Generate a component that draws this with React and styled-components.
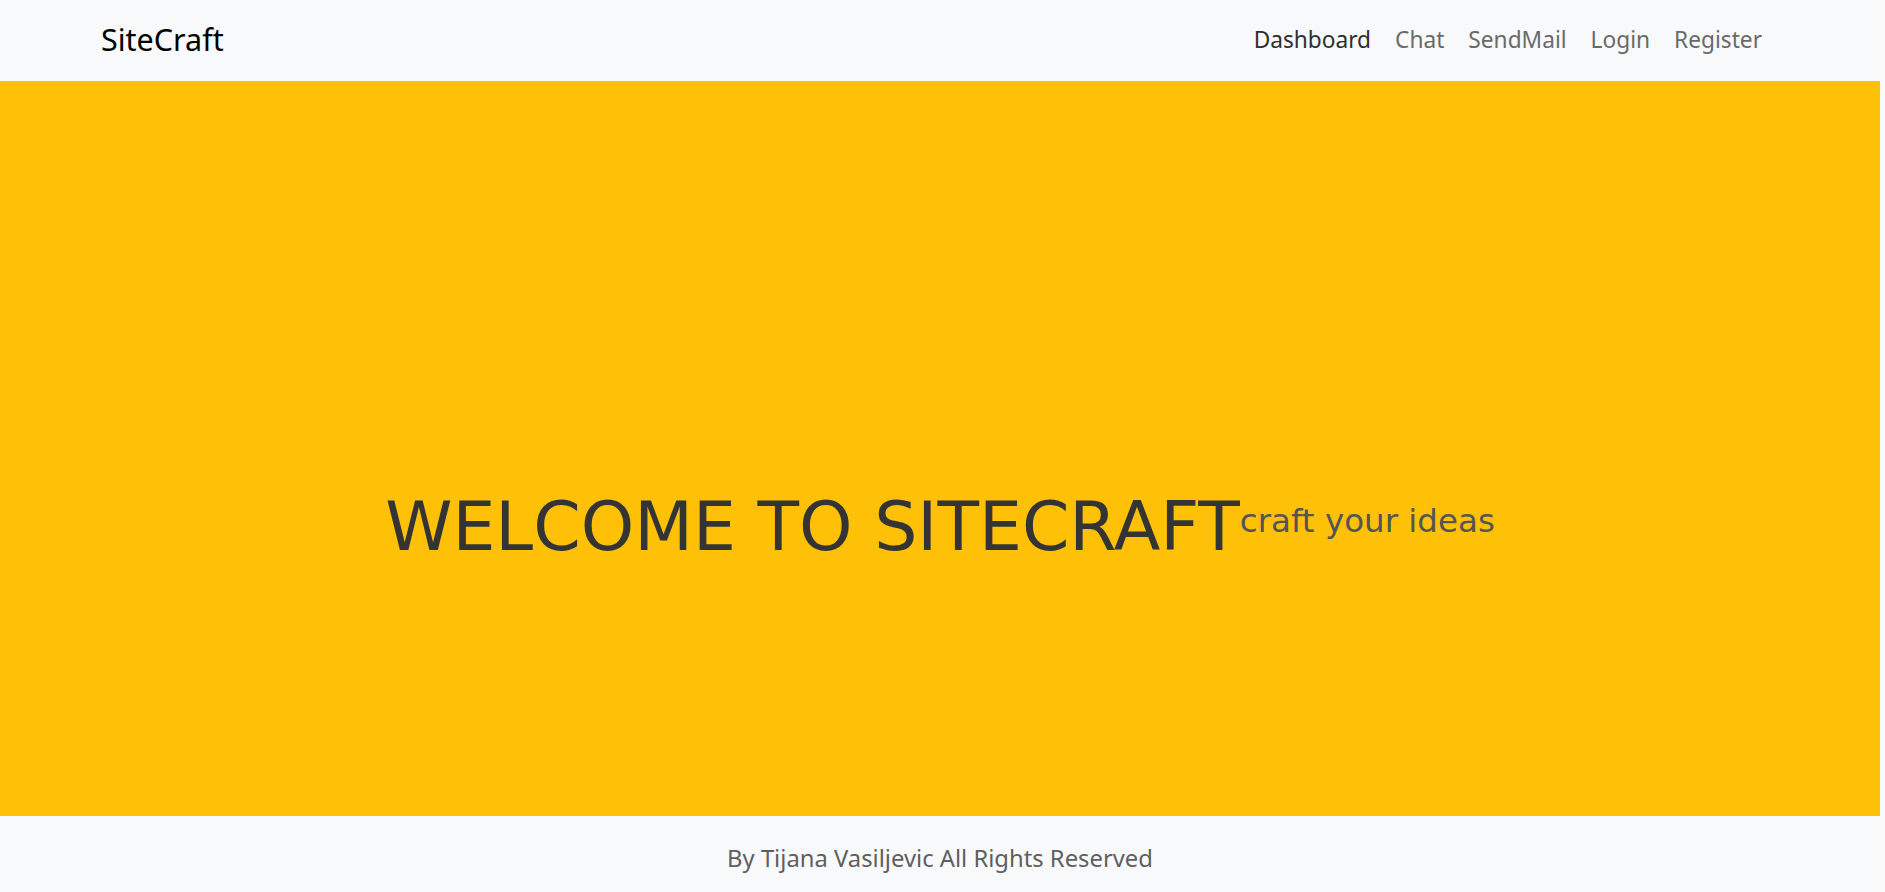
import React from 'react';
import styled, { createGlobalStyle } from 'styled-components';

const GlobalStyle = createGlobalStyle`
  html, body {
    margin: 0;
    padding: 0;
    background: #fafafa;
  }
  body {
    font-family: "Noto Sans", "Open Sans", sans-serif;
  }
`;

const Page = styled.div`
  width: calc(100vw - 5px);
  height: 892px;
  display: flex;
  flex-direction: column;
`;

const Navbar = styled.nav`
  height: 81px;
  flex: none;
  background: #f8f9fa;
  display: flex;
  align-items: center;
  justify-content: space-between;
  padding: 0 118px 3px 101px;
  box-sizing: border-box;
`;

const Brand = styled.a`
  font-size: 30.5px;
  color: #000;
  text-decoration: none;
`;

const NavList = styled.ul`
  display: flex;
  gap: 24px;
  margin: 0;
  padding: 0;
  list-style: none;
`;

const NavLink = styled.a`
  font-size: 22.7px;
  color: ${(p) => (p.active ? '#2f2f2f' : '#6a6a6a')};
  text-decoration: none;
`;

const Hero = styled.main`
  flex: 1;
  background: #ffc107;
  display: flex;
  align-items: center;
  justify-content: center;
  padding-top: 157px;
  box-sizing: border-box;
`;

const Title = styled.h1`
  margin: 0;
  font-family: "DejaVu Sans", sans-serif;
  font-weight: 400;
  font-size: 68px;
  color: #343434;
  line-height: 1.2;
`;

const Tagline = styled.span`
  font-family: "DejaVu Sans", sans-serif;
  font-size: 32.5px;
  color: #555;
  margin-bottom: 12px;
`;

const Footer = styled.footer`
  height: 76px;
  flex: none;
  background: #f8f9fa;
  display: flex;
  align-items: center;
  justify-content: center;
  font-size: 23.8px;
  color: #5f5f5f;
  padding-top: 8px;
  box-sizing: border-box;
`;

const links = ['Dashboard', 'Chat', 'SendMail', 'Login', 'Register'];

export default function App() {
  return (
    <Page>
      <GlobalStyle />
      <Navbar>
        <Brand href="#">SiteCraft</Brand>
        <NavList>
          {links.map((l, i) => (
            <li key={l}>
              <NavLink href="#" active={i === 0 ? 1 : 0}>
                {l}
              </NavLink>
            </li>
          ))}
        </NavList>
      </Navbar>
      <Hero>
        <Title>WELCOME TO SITECRAFT</Title>
        <Tagline>craft your ideas</Tagline>
      </Hero>
      <Footer>By Tijana Vasiljevic All Rights Reserved</Footer>
    </Page>
  );
}
